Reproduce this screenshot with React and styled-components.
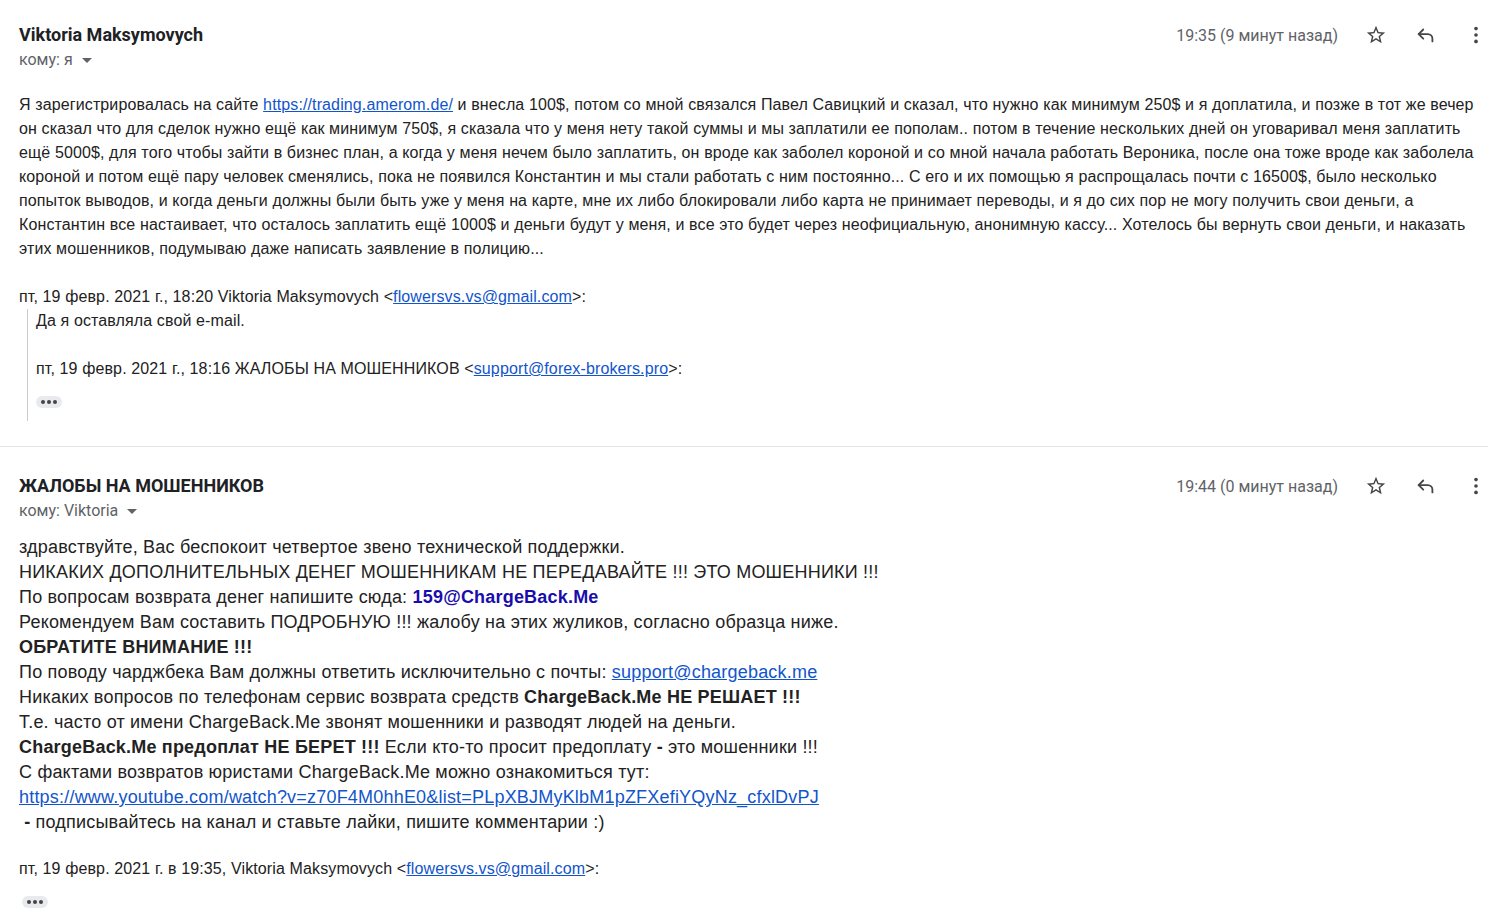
import React from "react";
import styled, { createGlobalStyle } from "styled-components";

const GlobalStyle = createGlobalStyle`
  body {
    margin: 0;
    background: #fff;
  }
`;

const Page = styled.div`
  width: 1506px;
`;

const Message = styled.div`
  padding: ${(p) => p.pt}px 0 ${(p) => p.pb}px 19px;
`;

const Divider = styled.hr`
  width: 1488px;
  margin: 0;
  border: none;
  border-top: 1px solid #e4e4e4;
`;

const Header = styled.div`
  display: flex;
  justify-content: space-between;
  align-items: flex-start;
  padding-right: 5px;
`;

const Sender = styled.div`
  display: flex;
  flex-direction: column;
`;

const Name = styled.div`
  font-family: Roboto, "Liberation Sans", sans-serif;
  font-weight: 700;
  font-size: 18px;
  line-height: 28px;
  color: #202124;
`;

const To = styled.div`
  display: flex;
  align-items: center;
  gap: 7px;
  font-family: Roboto, "Liberation Sans", sans-serif;
  font-size: 16px;
  line-height: 22px;
  color: #5f6368;
`;

const Caret = styled.span`
  width: 0;
  height: 0;
  border-left: 5px solid transparent;
  border-right: 5px solid transparent;
  border-top: 5px solid #5f6368;
  margin-left: 2px;
`;

const Meta = styled.div`
  display: flex;
  align-items: center;
  height: 28px;
`;

const Time = styled.span`
  font-family: Roboto, "Liberation Sans", sans-serif;
  font-size: 16px;
  color: #5f6368;
  margin-right: 13px;
`;

const IconBtn = styled.span`
  width: 50px;
  display: flex;
  justify-content: center;
  align-items: center;
  color: #444746;
`;

const Body = styled.div`
  font-family: "Liberation Sans", Arial, sans-serif;
  font-size: ${(p) => p.size}px;
  line-height: ${(p) => p.lh}px;
  letter-spacing: ${(p) => p.ls}px;
  color: #222;
  margin-top: ${(p) => p.mt}px;
`;

const Link = styled.a`
  color: #1155cc;
  text-decoration: underline;
`;

const Strong = styled.b`
  font-weight: 700;
`;

const BlueStrong = styled.b`
  font-weight: 700;
  color: #1a0dab;
`;

const Attribution = styled.div`
  font-family: "Liberation Sans", Arial, sans-serif;
  font-size: 16px;
  line-height: 24px;
  letter-spacing: 0.12px;
  color: #222;
  margin-top: ${(p) => p.mt}px;
`;

const Quote = styled.div`
  margin: 0 0 0 8px;
  padding: 0 0 13px 8px;
  border-left: 1px solid #ccc;
  font-family: "Liberation Sans", Arial, sans-serif;
  font-size: 16px;
  line-height: 24px;
  letter-spacing: 0.12px;
  color: #222;
`;

const Gap = styled.div`
  height: ${(p) => p.h}px;
`;

const Dots = styled.span`
  display: flex;
  align-items: center;
  justify-content: center;
  gap: 2px;
  width: 26px;
  height: 12px;
  border-radius: 6px;
  background: #e8eaed;
  margin-top: ${(p) => p.mt}px;
  margin-left: ${(p) => p.ml || 0}px;
  i {
    width: 4px;
    height: 4px;
    border-radius: 50%;
    background: #444;
  }
`;

const Star = () => (
  <svg width="22" height="22" viewBox="0 0 24 24" fill="currentColor">
    <path d="M22 9.24l-7.19-.62L12 2 9.19 8.63 2 9.24l5.46 4.73L5.82 21 12 17.27 18.18 21l-1.63-7.03L22 9.24zM12 15.4l-3.76 2.27 1-4.28-3.32-2.88 4.38-.38L12 6.1l1.71 4.04 4.38.38-3.32 2.88 1 4.28L12 15.4z" />
  </svg>
);

const Reply = () => (
  <svg width="22" height="22" viewBox="0 0 24 24" fill="none" stroke="currentColor" strokeWidth="2" strokeLinecap="round" strokeLinejoin="round">
    <path d="M9 6l-5 5 5 5" />
    <path d="M4 11h10a5 5 0 0 1 5 5v3" />
  </svg>
);

const More = () => (
  <svg width="22" height="22" viewBox="0 0 24 24" fill="currentColor">
    <circle cx="12" cy="5" r="2" />
    <circle cx="12" cy="12" r="2" />
    <circle cx="12" cy="19" r="2" />
  </svg>
);

function MessageHeader({ name, to, time }) {
  return (
    <Header>
      <Sender>
        <Name>{name}</Name>
        <To>
          кому: {to}
          <Caret />
        </To>
      </Sender>
      <Meta>
        <Time>{time}</Time>
        <IconBtn>
          <Star />
        </IconBtn>
        <IconBtn>
          <Reply />
        </IconBtn>
        <IconBtn>
          <More />
        </IconBtn>
      </Meta>
    </Header>
  );
}

const DotsBtn = (props) => (
  <Dots {...props}>
    <i />
    <i />
    <i />
  </Dots>
);

export default function App() {
  return (
    <Page>
      <GlobalStyle />
      <Message pt={21} pb={25}>
        <MessageHeader name="Viktoria Maksymovych" to="я" time="19:35 (9 минут назад)" />
        <Body size={16} lh={24} ls={0.12} mt={22}>
          Я зарегистрировалась на сайте <Link href="#">https://trading.amerom.de/</Link> и внесла 100$, потом со мной связался Павел Савицкий и сказал, что нужно как минимум 250$ и я доплатила, и позже в тот же вечер
          <br />
          он сказал что для сделок нужно ещё как минимум 750$, я сказала что у меня нету такой суммы и мы заплатили ее пополам.. потом в течение нескольких дней он уговаривал меня заплатить
          <br />
          ещё 5000$, для того чтобы зайти в бизнес план, а когда у меня нечем было заплатить, он вроде как заболел короной и со мной начала работать Вероника, после она тоже вроде как заболела
          <br />
          короной и потом ещё пару человек сменялись, пока не появился Константин и мы стали работать с ним постоянно... С его и их помощью я распрощалась почти с 16500$, было несколько
          <br />
          попыток выводов, и когда деньги должны были быть уже у меня на карте, мне их либо блокировали либо карта не принимает переводы, и я до сих пор не могу получить свои деньги, а
          <br />
          Константин все настаивает, что осталось заплатить ещё 1000$ и деньги будут у меня, и все это будет через неофициальную, анонимную кассу... Хотелось бы вернуть свои деньги, и наказать
          <br />
          этих мошенников, подумываю даже написать заявление в полицию...
        </Body>
        <Attribution mt={24}>
          пт, 19 февр. 2021 г., 18:20 Viktoria Maksymovych &lt;<Link href="#">flowersvs.vs@gmail.com</Link>&gt;:
        </Attribution>
        <Quote>
          Да я оставляла свой e-mail.
          <Gap h={24} />
          пт, 19 февр. 2021 г., 18:16 ЖАЛОБЫ НА МОШЕННИКОВ &lt;<Link href="#">support@forex-brokers.pro</Link>&gt;:
          <DotsBtn mt={15} />
        </Quote>
      </Message>
      <Divider />
      <Message pt={25} pb={0}>
        <MessageHeader name="ЖАЛОБЫ НА МОШЕННИКОВ" to="Viktoria" time="19:44 (0 минут назад)" />
        <Body size={18} lh={25} ls={0.2} mt={13}>
          здравствуйте, Вас беспокоит четвертое звено технической поддержки.
          <br />
          НИКАКИХ ДОПОЛНИТЕЛЬНЫХ ДЕНЕГ МОШЕННИКАМ НЕ ПЕРЕДАВАЙТЕ !!! ЭТО МОШЕННИКИ !!!
          <br />
          По вопросам возврата денег напишите сюда: <BlueStrong>159@ChargeBack.Me</BlueStrong>
          <br />
          Рекомендуем Вам составить ПОДРОБНУЮ !!! жалобу на этих жуликов, согласно образца ниже.
          <br />
          <Strong>ОБРАТИТЕ ВНИМАНИЕ !!!</Strong>
          <br />
          По поводу чарджбека Вам должны ответить исключительно с почты: <Link href="#">support@chargeback.me</Link>
          <br />
          Никаких вопросов по телефонам сервис возврата средств <Strong>ChargeBack.Me НЕ РЕШАЕТ !!!</Strong>
          <br />
          Т.е. часто от имени ChargeBack.Me звонят мошенники и разводят людей на деньги.
          <br />
          <Strong>ChargeBack.Me предоплат НЕ БЕРЕТ !!!</Strong> Если кто-то просит предоплату <Strong>-</Strong> это мошенники !!!
          <br />
          С фактами возвратов юристами ChargeBack.Me можно ознакомиться тут:
          <br />
          <Link href="#">https://www.youtube.com/watch?v=z70F4M0hhE0&amp;list=PLpXBJMyKlbM1pZFXefiYQyNz_cfxlDvPJ</Link>
          <br />
          &nbsp;<Strong>-</Strong> подписывайтесь на канал и ставьте лайки, пишите комментарии :)
        </Body>
        <Attribution mt={22}>
          пт, 19 февр. 2021 г. в 19:35, Viktoria Maksymovych &lt;<Link href="#">flowersvs.vs@gmail.com</Link>&gt;:
        </Attribution>
        <DotsBtn mt={15} ml={3} />
      </Message>
    </Page>
  );
}
